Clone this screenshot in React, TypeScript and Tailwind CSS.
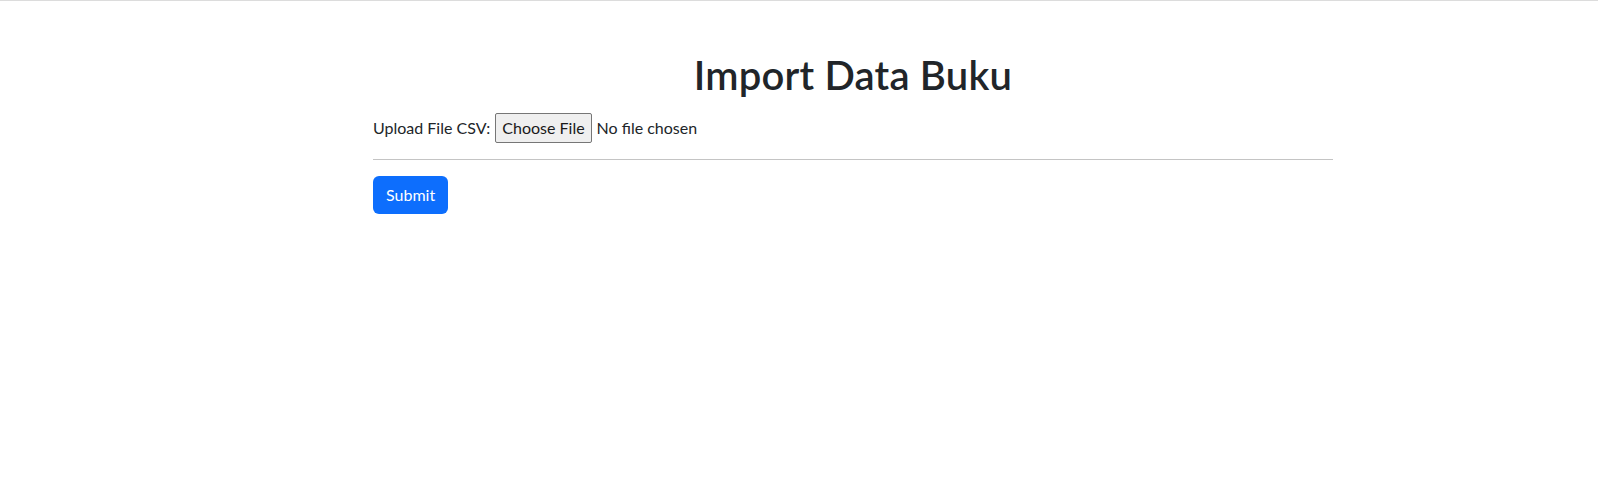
import React from "react";

export default function App() {
  return (
    <div className="min-h-[498px] bg-white border-t border-[#dcdcdc] font-['Lato','Liberation_Sans',sans-serif] text-[#212529] text-base leading-6">
      <div className="ml-[373px] w-[960px] pt-[50px]">
        <h1 className="text-center text-[40px] leading-[48px] font-semibold mb-2 tracking-[0.2px]">
          Import Data Buku
        </h1>

        <form className="pt-[6px]">
          <div className="flex items-center h-[30px]">
            <label className="mr-[5px]">Upload File CSV:</label>
            <span className="h-[30px] px-[6px] flex items-center bg-[#efefef] border border-[#767676] rounded-[2px] text-[#1a1a1a]">
              Choose File
            </span>
            <span className="ml-[5px]">No file chosen</span>
          </div>

          <hr className="mt-[16px] mb-4 border-0 border-t border-[#c4c4c4]" />

          <button
            type="button"
            className="h-[38px] px-[13px] rounded-[6px] bg-[#0d6efd] text-white"
          >
            Submit
          </button>
        </form>
      </div>
    </div>
  );
}
